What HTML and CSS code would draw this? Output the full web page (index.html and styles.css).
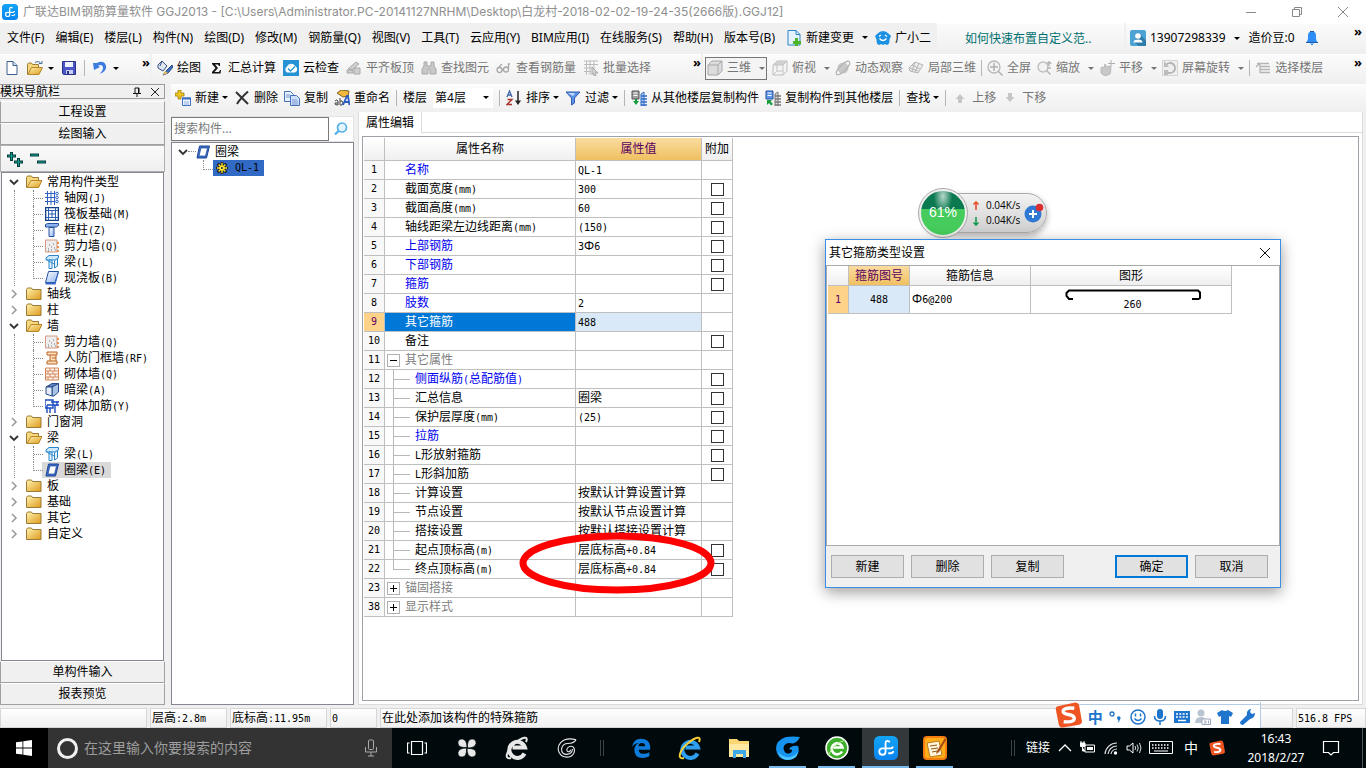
FILE: index.html
```html
<!DOCTYPE html>
<html lang="zh-CN">
<head>
<meta charset="utf-8">
<title>广联达BIM钢筋算量软件 GGJ2013</title>
<link rel="stylesheet" href="styles.css">
</head>
<body>
<svg class="defs" aria-hidden="true">
<defs>
<linearGradient id="gFold" x1="0" y1="0" x2="1" y2="1"><stop offset="0" stop-color="#fff3b0"/><stop offset="1" stop-color="#dd9a1c"/></linearGradient>
<linearGradient id="gBlue" x1="0" y1="0" x2="1" y2="1"><stop offset="0" stop-color="#fff"/><stop offset="1" stop-color="#8db4ee"/></linearGradient>
<linearGradient id="gBrand" x1="0" y1="0" x2="0" y2="1"><stop offset="0" stop-color="#12a4f5"/><stop offset="1" stop-color="#0a84f0"/></linearGradient>
</defs>
<symbol id="logo" viewBox="0 0 16 16"><rect width="16" height="16" rx="3.500" fill="url(#gBrand)"/><path d="M10.500 4.300Q10 3.300 9 3.300 7.700 3.300 7.700 5v5.500q0 2-2 2-2.200 0-2.200-2.200 0-2 2.200-2h5q1.800 0 1.800-1.300M9.500 11.500h1.500q1.800 0 1.800-1.500" fill="none" stroke="#fff" stroke-width="1.200"/></symbol>
<symbol id="new" viewBox="0 0 16 16"><path d="M3 1.500h6l4 4v9H3z" fill="#fff" stroke="#3c5f8f"/><path d="M9 1.500v4h4" fill="#c9def5" stroke="#3c5f8f"/></symbol>
<symbol id="folder" viewBox="0 0 16 16"><path d="M.5 3.500l1-1.500h4l1 1.500h8.500v10H.5z" fill="url(#gFold)" stroke="#9a7a34"/></symbol>
<symbol id="open" viewBox="0 0 16 16"><path d="M.5 13.500V3.500l1-1.500h4l1 1.500h6v3" fill="#f6d77c" stroke="#9a7a34"/><path d="M1 13.500l4-7h11l-3.500 7z" fill="url(#gFold)" stroke="#b8862a"/></symbol>
<symbol id="openarrow" viewBox="0 0 16 16"><path d="M.5 14.500V4.500l1-1.500h3l1 1.500h6v3" fill="#f6d77c" stroke="#9a7a34"/><path d="M1 14.500l3.500-7h11l-3.500 7z" fill="url(#gFold)" stroke="#b8862a"/><path d="M8 2.500c3-1.500 5-1 6 1.500M12 3.500h3v-2.500" fill="none" stroke="#456c9c"/></symbol>
<symbol id="save" viewBox="0 0 16 16"><path d="M1.500 1.500h13v13h-12l-1-1z" fill="#4a56c8" stroke="#2a3388"/><path d="M4 2h8v5H4z" fill="#eef1ff"/><path d="M5 10h7v4H5z" fill="#c9cdf0"/><path d="M6 11h2v3H6z" fill="#2a3388"/></symbol>
<symbol id="undo" viewBox="0 0 16 16"><path d="M1 3l1 7 6-3-2-1.500c3-1.500 5 0 5 2.500s-2 4-3 6c4-1.500 6.500-4.500 6-8-.5-4-5-5.500-9-3z" fill="#3c7ce0"/></symbol>
<symbol id="brush" viewBox="0 0 16 16"><path d="M1 5l4-4 5 5-4 5-5-3z" fill="#dfe6f2" stroke="#33507f"/><path d="M5 1l-2 5" stroke="#33507f"/><path d="M15 5l-6 6-3 4 5-2 5-6z" fill="#3f6fc0" stroke="#27477f"/><path d="M8 11l3 2-5 2z" fill="#f0c45a"/></symbol>
<symbol id="sigma" viewBox="0 0 16 16"><path d="M4 3h8v3h-1l-1-1.500H7L10 8l-3.500 4H11l1-2h1l-.5 3.500H4V12l3.500-4L4 4z" fill="#111"/></symbol>
<symbol id="cloud" viewBox="0 0 16 16"><rect width="16" height="16" fill="#2492d4"/><path d="M4 12.500a3.500 3.500 0 0 1 0-6A4.500 4.500 0 0 1 12 6a3.500 3.500 0 0 1 0 6.500z" fill="#fff"/><path d="M5 8.500l2.500 2.500L12 6.500" fill="none" stroke="#2492d4" stroke-width="1.300"/></symbol>
<symbol id="align" viewBox="0 0 16 16"><path d="M2 9l8-7 3 2-7 6zM1 10h6v3H1zM8 8h6v6H8z" fill="#cfcfcf" stroke="#a8a8a8"/></symbol>
<symbol id="bino" viewBox="0 0 16 16"><path d="M3 2h3v4h4V2h3v4l2 3v5H9V9H7v5H1V9l2-3z" fill="#c8c8c8" stroke="#a8a8a8"/></symbol>
<symbol id="glasses" viewBox="0 0 16 16"><g fill="none" stroke="#a8a8a8" stroke-width="1.300"><circle cx="3.500" cy="10" r="2.500"/><circle cx="10" cy="9.500" r="2.500"/><path d="M6 10h2M12.500 9V4l1.500 0M3 7l3-3"/></g></symbol>
<symbol id="batch" viewBox="0 0 16 16"><path d="M1 1h14M1 4.500h14M1 8h9M1 11.500h7M3.500 1v14M7 1v14M11 1v8" stroke="#bbb" fill="none"/><path d="M9 7l6 6h-3l1 3-2-.5-1-2-1 1z" fill="#d0d0d0" stroke="#a8a8a8"/></symbol>
<symbol id="cube" viewBox="0 0 16 16"><path d="M1 5l4-4h10v10l-4 4H1z" fill="#dcdcdc" stroke="#a8a8a8"/><path d="M1 5h10v10M11 5l4-4" fill="none" stroke="#a8a8a8"/></symbol>
<symbol id="wirecube" viewBox="0 0 16 16"><path d="M1 5l4-4h10v10l-4 4H1z" fill="#f4f4f4" stroke="#bcbcbc"/><path d="M1 5h10l4-4H5z" fill="#d0d0d0"/><path d="M1 5h10v10M11 5l4-4M5 5v6h6M5 11l-4 4" fill="none" stroke="#c4c4c4"/></symbol>
<symbol id="orbit" viewBox="0 0 16 16"><circle cx="8" cy="8" r="5.500" fill="#c8c8c8"/><ellipse cx="8" cy="8" rx="9" ry="3" transform="rotate(-45 8 8)" fill="none" stroke="#b0b0b0"/></symbol>
<symbol id="part" viewBox="0 0 16 16"><path d="M1 8l6-6 8 3-5 8-8-2zM4 5l8 4M7 2l-3 9M11 3.500L7 12M2 8l8 3" fill="#ededed" stroke="#b4b4b4"/></symbol>
<symbol id="full" viewBox="0 0 16 16"><circle cx="7" cy="7" r="6" fill="#f3f3f3" stroke="#b8b8b8" stroke-width="1.300"/><path d="M7 3v8M3 7h8M11.500 11.500l4 4" stroke="#b0b0b0" stroke-width="1.500"/></symbol>
<symbol id="zoomi" viewBox="0 0 16 16"><circle cx="7" cy="7" r="5" fill="#f3f3f3" stroke="#c0c0c0" stroke-width="1.500"/><path d="M10.500 10.500l4 4M13 1v5M10.500 3h5M11 8h4" stroke="#b4b4b4" stroke-width="1.500"/></symbol>
<symbol id="pan" viewBox="0 0 16 16"><path d="M2 9c0-3 2-2 3-1l1-4 2 3 3-1 1 3-1 5-5 2-4-3z" fill="#c8c8c8" stroke="#b8b8b8"/><path d="M12 0v7M9 3.500h7" stroke="#b0b0b0"/></symbol>
<symbol id="rot" viewBox="0 0 16 16"><path d="M.5.500h15v15H.500z" fill="#efefef" stroke="#d4d4d4"/><path d="M4 5a5 5 0 1 1 1 7" fill="none" stroke="#b0b0b0" stroke-width="1.800"/><path d="M2 1v6h5zM2 10h4v5H2z" fill="#bcbcbc"/></symbol>
<symbol id="floors" viewBox="0 0 16 16"><path d="M2 3.500h12M5 6.500h10M5 9.500h10M5 12.500h10M1 7l4-4M5 3v10" stroke="#b4b4b4" stroke-width="1.300"/></symbol>
<symbol id="docplus" viewBox="0 0 16 16"><path d="M2 .5h8l4 4V15H2z" fill="#e4f3ff" stroke="#2f83c4"/><path d="M10 .5v4h4" fill="none" stroke="#2f83c4"/><path d="M9 8h3v3h3v3h-3v2H9v-2H7v-3h2z" fill="#4db52a"/></symbol>
<symbol id="mascot" viewBox="0 0 16 16"><path d="M2 4q6-6 12 0l2 2-1.500 3.500q0 5-2.500 5.500l-2-1-2 1-2-1-2 1q-2.500-.5-2.500-5.500L0 6z" fill="#1b91e4"/><path d="M4 6.500l2-1.500M12 6.500L10 5M4.500 8.500q3.500 4 7 0" fill="none" stroke="#fff" stroke-width="1.300"/></symbol>
<symbol id="user" viewBox="0 0 16 16"><rect width="16" height="16" rx="2" fill="#4da3d4"/><path d="M10 4l6 7v5H9l-5-4z" fill="#2e7cab"/><circle cx="8" cy="6" r="2.800" fill="#fff"/><path d="M3.500 12.500q0-3 4.500-3t4.500 3z" fill="#fff"/></symbol>
<symbol id="bell" viewBox="0 0 16 16"><path d="M2 12.500c2-2 2-3 2-7a4 4 0 0 1 8 0c0 4 0 5 2 7zM6 13.500h4l-2 2z" fill="#2f8ef5"/><path d="M6 1.500h4M2 12.500h12" stroke="#1c5ca4"/></symbol>
<symbol id="newcomp" viewBox="0 0 16 16"><path d="M3 0h3v3h3v3H6v3H3V6H0V3h3z" fill="#ecc61f" stroke="#9c7c14" stroke-width=".8"/><path d="M7.500 8h8v7.500h-8z" fill="#eef5ff" stroke="#3e6fc4"/><path d="M7 7.500h9v2H7z" fill="#3e6fc4"/><path d="M9 12h5M9 14h5" stroke="#8fb0e2"/></symbol>
<symbol id="del" viewBox="0 0 16 16"><path d="M2 2l12 12M14 1.500C9 6 6 9 3 14" stroke="#333" stroke-width="2" fill="none"/></symbol>
<symbol id="copy" viewBox="0 0 16 16"><path d="M.5 1.500h6l3 3v7h-9z" fill="#e7f0ff" stroke="#4770b8"/><path d="M6.500 5.500h6l3 3v7h-9z" fill="#cfe0fb" stroke="#4770b8"/><path d="M2 5h4M2 7h4M8 10h5M8 12h6M8 14h6" stroke="#7797cc"/></symbol>
<symbol id="rename" viewBox="0 0 16 16"><path d="M3 3l4-3 8 1-1 5-5 1z" fill="#f0b83c" stroke="#7f6224"/><path d="M1 11q2-2 3 0v4q-4 0-3-2h3M6 8v7h2q2-2 0-4H6" fill="none" stroke="#444"/><path d="M9 15l4-9h1l1.500 9M10.500 12h5" fill="none" stroke="#2c5cc0" stroke-width="1.800"/></symbol>
<symbol id="az" viewBox="0 0 16 16"><path d="M1 7l2.500-6L6 7M2 5h3" fill="none" stroke="#3d65a8" stroke-width="1.300"/><path d="M1.500 9.500H6l-5 5h5" fill="none" stroke="#a8342c" stroke-width="1.400"/><path d="M12 1v11" stroke="#222" stroke-width="1.500"/><path d="M9 10.500h6L12 15z" fill="#222"/></symbol>
<symbol id="funnel" viewBox="0 0 16 16"><path d="M1 2h14l-5.500 6v5L6.500 15V8z" fill="#5b93e8" stroke="#2f5cab"/><path d="M3 3h7l-2 3z" fill="#c4dcff"/></symbol>
<symbol id="fromfl" viewBox="0 0 16 16"><path d="M1 1h7v8H1z" fill="#a0a0a0" stroke="#555"/><path d="M2.500 3h4M2.500 5.500h4" stroke="#fff"/><path d="M10 16V4l3-2v14" fill="#bcd4f6" stroke="#2f6bc4"/><path d="M10 6h6M10 9h6M10 12h6M10 15h6" stroke="#2f6bc4" stroke-width="1.500"/><path d="M4 9h2v2h2l-3 4-3-4h2z" fill="#169c3c"/></symbol>
<symbol id="tofl" viewBox="0 0 16 16"><path d="M1 1h7v8H1z" fill="#5f97ea" stroke="#2450a0"/><path d="M2.500 3h4M2.500 5.500h4" stroke="#fff"/><path d="M10 16V4l3-2v14" fill="#ddd" stroke="#777"/><path d="M10 6h6M10 9h6M10 12h6M10 15h6" stroke="#777" stroke-width="1.500"/><path d="M2 10h5L5.500 11.500 8 14l-2 1.500L4 13l-2 2z" fill="#169c3c"/></symbol>
<symbol id="up" viewBox="0 0 16 16"><path d="M8 4l4.500 5H10v4H6V9H3.500z" fill="#c6c6c6"/></symbol>
<symbol id="down" viewBox="0 0 16 16"><path d="M8 12L3.500 7H6V3h4v4h2.500z" fill="#c6c6c6"/></symbol>
<symbol id="axis" viewBox="0 0 14 14"><path d="M0 2.500h10M0 6.500h10M0 10.500h10M2.500 0v14M6 0v14M9.500 0v14" stroke="#2f62c0" fill="none"/><circle cx="12" cy="2.500" r="1.300" fill="#fff" stroke="#2f62c0"/><circle cx="12" cy="6.500" r="1.300" fill="#fff" stroke="#2f62c0"/><circle cx="12" cy="10.500" r="1.300" fill="#fff" stroke="#2f62c0"/></symbol>
<symbol id="raft" viewBox="0 0 14 14"><path d="M.5.500h13v13H.500z" fill="#fff" stroke="#153f86" stroke-width="1.600"/><path d="M3.500 3.500h7v7h-7zM1 3.500h12M1 10.500h12M3.500 1v12M10.500 1v12M7 3.500v7M3.500 7h7" fill="none" stroke="#2b60b0"/></symbol>
<symbol id="col" viewBox="0 0 14 14"><path d="M.5 1.500l2-1h11v2l-2 1.500H.500z" fill="#8db4ee" stroke="#2450a0"/><path d="M4 4.500h5v9H4z" fill="url(#gBlue)" stroke="#2450a0"/></symbol>
<symbol id="wall" viewBox="0 0 14 14"><path d="M.5 1h11.500v12H.500z" fill="#eee" stroke="#d29a80"/><path d="M3 10h1M6 11h1M9 9h1M4 6h1M8 5h1M10 11h1M6 8h1M3 12h1" stroke="#777"/><path d="M12 4h2M12 8h2M12 12h2" stroke="#e07020" stroke-width="1.500"/></symbol>
<symbol id="beam" viewBox="0 0 14 14"><path d="M1 3l3-2.500h9.500V3L11 5H1z" fill="#cfe8fb" stroke="#2a86c8"/><path d="M4 5h3v8.500H4zM9.500 6l3-3v8l-3 2z" fill="#e6f3ff" stroke="#2a86c8"/><path d="M2 5l7 4" stroke="#2a86c8"/></symbol>
<symbol id="slab" viewBox="0 0 14 14"><path d="M3.500.500h10L10 11.500H.500z" fill="url(#gBlue)" stroke="#2450a0"/><path d="M.5 11.500h9.500L13.500.500v2L10.500 13.500h-10z" fill="#3468c8"/></symbol>
<symbol id="door" viewBox="0 0 14 14"><path d="M2 1h10v3h-1v6h1v3H2v-3h3V4H2z" fill="#ffe0b8" stroke="#b8622a"/><path d="M5 4h6M7 7h4M5 10h6" stroke="#b8622a"/></symbol>
<symbol id="brick" viewBox="0 0 14 14"><path d="M.5 1h13v12H.500zM.5 4h13M.5 7h13M.5 10h13M5 1v3M9.500 1v3M3 4v3M8 4v3M5 7v3M10 7v3M3 10v3M8 10v3" fill="#fff5ec" stroke="#d4875c"/></symbol>
<symbol id="hbeam" viewBox="0 0 14 14"><path d="M1 4l6-3.500h6.500L7 4z" fill="#5f86c4" stroke="#274a86"/><path d="M7 4l6.500-3.500V9L9 13H7z" fill="#a9c2e8" stroke="#274a86"/><path d="M1 4h6v9L1 11z" fill="#e4edf9" stroke="#274a86"/></symbol>
<symbol id="rebar" viewBox="0 0 14 14"><path d="M0 1h8v8H0zM6 3h8M6 6h8M2 6h8v8M5 9v5M2 6v8M12 2v5" fill="none" stroke="#1d4cc0" stroke-width="1.400"/></symbol>
<symbol id="ring" viewBox="0 0 14 14"><path d="M3.500 1h10l-3 12H1z" fill="#3c70cc" stroke="#1d4594"/><path d="M5 3h6.500l-2 8H3z" fill="#fff" stroke="#1d4594" stroke-width=".7"/></symbol>
<symbol id="gear" viewBox="0 0 14 14"><path d="M7 0v14M0 7h14M2 2l10 10M12 2L2 12" stroke="#111" stroke-width="3.200"/><path d="M7 1v12M1 7h12M3 3l8 8M11 3l-8 8" stroke="#ffe733" stroke-width="1.600"/><circle cx="7" cy="7" r="3" fill="#ffe733"/><circle cx="7" cy="7" r="1.300" fill="#333"/></symbol>
<symbol id="cv" viewBox="0 0 10 10"><path d="M1 3l4 4 4-4" fill="none" stroke="#333" stroke-width="1.800"/></symbol>
<symbol id="cr" viewBox="0 0 10 10"><path d="M3 1l4 4-4 4" fill="none" stroke="#999" stroke-width="1.500"/></symbol>
<symbol id="mag" viewBox="0 0 14 14"><circle cx="8" cy="5.500" r="4.500" fill="#e4f4ff" stroke="#58b0e8" stroke-width="1.700"/><path d="M5 8.500l-4 4" stroke="#58b0e8" stroke-width="2.400"/></symbol>
<symbol id="sogou" viewBox="0 0 28 26"><path d="M3 4l18-4q3 0 4 3l3 17q0 2-3 3L8 26q-3 0-4-3L1 8q-1-3 2-4z" fill="#ee5523"/><path d="M20 6Q10 5 8.500 8.500 8 11.500 14 12.500t6 4.500q-1 4-11 3" fill="none" stroke="#fff" stroke-width="3.500"/></symbol>
<symbol id="win" viewBox="0 0 16 16"><path d="M0 2.300l6.500-.9v6.200H0zM7.300 1.300L16 0v7.600H7.300zM0 8.400h6.500v6.200L0 13.700zM7.300 8.400H16V16l-8.700-1.300z" fill="#fff"/></symbol>
<symbol id="mic" viewBox="0 0 16 18"><rect x="5.500" y="1" width="5" height="9.500" rx="1" fill="none" stroke="#aaa"/><path d="M2.500 8v5h11V8M8 13v4M5 17h6" fill="none" stroke="#aaa"/></symbol>
<symbol id="tview" viewBox="0 0 20 16"><path d="M4.500 1.500h11v13h-11zM2.500 3H.500v10h2M17.500 3h2v10h-2" fill="none" stroke="#fff" stroke-width="1.200"/></symbol>
<symbol id="fan" viewBox="0 0 22 22"><path d="M11 10.500Q1 11 1 5.500 1 1 6 1q5 1 5 9.500zM11.500 11Q11 1 16.500 1 21 1 21 6q-1 5-9.500 5zM11 11.500Q21 11 21 16.500 21 21 16 21q-5-1-5-9.500zM10.500 11Q11 21 5.500 21 1 21 1 16q1-5 9.500-5z" fill="#e8e8e8" stroke="#000a0d" stroke-width=".8"/></symbol>
<symbol id="ie" viewBox="0 0 24 24"><path d="M19.500 17.500A8 8 0 1 1 20 11.500H7.500" fill="none" stroke="currentColor" stroke-width="4"/><path d="M6 22C-1 24 1 15 9 8S24-1 21 6" fill="none" stroke="var(--ring, currentColor)" stroke-width="2"/></symbol>
<symbol id="edge" viewBox="0 0 24 24"><path d="M1 11Q3 1 12 1q10 0 11 9v4H9q1 5 6 5 4 0 7-2v5q-4 2-8 2Q4 24 4 14q0-5 5-8-6 1-8 5zm8-1h8q0-4-4-4t-4 4z" fill="#0f7cdc"/></symbol>
<symbol id="gswirl" viewBox="0 0 22 22"><path d="M21 2Q10-1 4 5C-2 12 3 21 11 21c7 0 10-7 7-11-3-2-8 0-7 4 1 2 4 1 4-1M21 2q-3 4-9 4-6 0-7 6 0 6 6 6 6-1 6-6" fill="none" stroke="currentColor" stroke-width="1.200"/></symbol>
<symbol id="gblue" viewBox="0 0 24 24"><path d="M24 1Q20 9 14 7 8 7 7.500 12 8 18 13 17.500q3-.5 3-3.500l-3-1q3-4 9-3 2 5-1 9-4 5-10 5Q1 23 0 13 0 4 10 1q7-1 14 0z" fill="#1593ef"/><path d="M2 16Q7 22 14 21q5-1 8-5-1 8-11 8-7-1-9-8z" fill="#4fc4ff"/></symbol>
<symbol id="files" viewBox="0 0 24 22"><path d="M2 2h8l2 2h10v16H2z" fill="#fbd774"/><path d="M2 7h20v13H2z" fill="#ffe9a2"/><path d="M6 21v-8h13v8h-3v-4H9v4z" fill="#3fa9e8"/></symbol>
<symbol id="ge" viewBox="0 0 24 24"><circle cx="12" cy="12" r="11" fill="#3eae2c" stroke="#fff" stroke-width="1.500"/><path d="M17 15.500a5.500 5.500 0 1 1 .5-4H8" fill="none" stroke="#fff" stroke-width="2.600"/><path d="M3 20Q8 8 20 4" stroke="#b8f090" fill="none"/></symbol>
<symbol id="note" viewBox="0 0 24 24"><rect x="1" y="1" width="22" height="22" rx="3" fill="#ffad18" stroke="#f47c10" stroke-width="2"/><path d="M4 7l12-2 3 14-12 2z" fill="#fff4d8" stroke="#b87a20"/><path d="M7 10l7-1M8 13l7-1M9 16l5-1" stroke="#8a5a20"/><path d="M22 2l-8 13-1 3 3-2 7-12z" fill="#a34a18"/></symbol>
</svg>

<header class="titlebar">
  <svg class="i16"><use href="#logo"/></svg>
  <h1>广联达BIM钢筋算量软件 GGJ2013 - [C:\Users\Administrator.PC-20141127NRHM\Desktop\白龙村-2018-02-02-19-24-35(2666版).GGJ12]</h1>
  <div class="winbtns">
    <button aria-label="最小化"><svg viewBox="0 0 12 12"><path d="M1 6.500h10" stroke="#888"/></svg></button>
    <button aria-label="还原"><svg viewBox="0 0 12 12"><path d="M1.500 3.500h7v7h-7zM3.500 3.500v-2h7v7h-2" fill="none" stroke="#888"/></svg></button>
    <button aria-label="关闭"><svg viewBox="0 0 12 12"><path d="M1 1l10 10M11 1L1 11" stroke="#888"/></svg></button>
  </div>
</header>

<nav class="menubar">
  <div class="menus">
    <button>文件(F)</button><button>编辑(E)</button><button>楼层(L)</button><button>构件(N)</button><button>绘图(D)</button><button>修改(M)</button><button>钢筋量(Q)</button><button>视图(V)</button><button>工具(T)</button><button>云应用(Y)</button><button>BIM应用(I)</button><button>在线服务(S)</button><button>帮助(H)</button><button>版本号(B)</button>
    <button class="tb"><svg class="i16"><use href="#docplus"/></svg>新建变更<i class="dd"></i></button>
    <button class="tb"><svg class="i16"><use href="#mascot"/></svg>广小二</button>
  </div>
  <div class="tip"><a href="#">如何快速布置自定义范..</a></div>
  <div class="account">
    <button class="tb"><svg class="i16"><use href="#user"/></svg><span class="phone">13907298339</span><i class="dd"></i></button>
    <span>造价豆:0</span>
    <svg class="i16"><use href="#bell"/></svg>
    <b class="more">»</b>
  </div>
</nav>

<div class="toolrow">
  <div class="group files">
    <button class="tb" aria-label="新建"><svg class="i16"><use href="#new"/></svg></button>
    <button class="tb" aria-label="打开"><svg class="i16"><use href="#openarrow"/></svg><i class="dd"></i></button>
    <button class="tb" aria-label="保存"><svg class="i16"><use href="#save"/></svg></button>
    <i class="sep"></i>
    <button class="tb" aria-label="撤销"><svg class="i16"><use href="#undo"/></svg><i class="dd"></i></button>
    <b class="more">»</b>
  </div>
  <div class="group draw">
    <button class="tb"><svg class="i16"><use href="#brush"/></svg>绘图</button>
    <button class="tb"><svg class="i16"><use href="#sigma"/></svg>汇总计算</button>
    <button class="tb"><svg class="i16"><use href="#cloud"/></svg>云检查</button>
    <button class="tb off"><svg class="i16"><use href="#align"/></svg>平齐板顶</button>
    <button class="tb off"><svg class="i16"><use href="#bino"/></svg>查找图元</button>
    <button class="tb off"><svg class="i16"><use href="#glasses"/></svg>查看钢筋量</button>
    <button class="tb off"><svg class="i16"><use href="#batch"/></svg>批量选择</button>
    <b class="more">»</b>
  </div>
  <div class="group view">
    <button class="tb off boxed"><svg class="i16"><use href="#cube"/></svg>三维<i class="dd"></i></button>
    <button class="tb off"><svg class="i16"><use href="#wirecube"/></svg>俯视<i class="dd"></i></button>
    <button class="tb off"><svg class="i16"><use href="#orbit"/></svg>动态观察</button>
    <button class="tb off"><svg class="i16"><use href="#part"/></svg>局部三维</button>
    <i class="sep"></i>
    <button class="tb off"><svg class="i16"><use href="#full"/></svg>全屏</button>
    <button class="tb off"><svg class="i16"><use href="#zoomi"/></svg>缩放<i class="dd"></i></button>
    <button class="tb off"><svg class="i16"><use href="#pan"/></svg>平移<i class="dd"></i></button>
    <button class="tb off"><svg class="i16"><use href="#rot"/></svg>屏幕旋转<i class="dd"></i></button>
    <i class="sep"></i>
    <button class="tb off"><svg class="i16"><use href="#floors"/></svg>选择楼层</button>
    <b class="more">»</b>
  </div>
</div>

<main class="work">
  <aside class="nav">
    <div class="navhead"><span>模块导航栏</span>
      <svg viewBox="0 0 10 10"><path d="M3 1h4v5M3 1v5M1 6.500h8M5 6.500V10M6.500 1v5" fill="none" stroke="#111"/></svg>
      <svg viewBox="0 0 10 10"><path d="M1 1l8 8M9 1L1 9" stroke="#222"/></svg></div>
    <button class="navbtn">工程设置</button>
    <button class="navbtn">绘图输入</button>
    <div class="navtools">
      <svg viewBox="0 0 42 16"><g stroke="#053c3c" stroke-width="3"><path d="M0 5h9M4.500 1v9M7 11h9M11.500 7v9M23 4h9M30 11h9"/></g><g stroke="#14a294"><path d="M1 5h7M4.500 2v7M8 11h7M11.500 8v7M24 4h7M31 11h7"/></g></svg>
    </div>
    <ul class="tree">
      <li><div class="n"><svg class="i10"><use href="#cv"/></svg><svg class="i16"><use href="#open"/></svg>常用构件类型</div>
        <ul>
          <li><svg class="i14"><use href="#axis"/></svg><span>轴网<span class="m">(J)</span></span></li>
          <li><svg class="i14"><use href="#raft"/></svg><span>筏板基础<span class="m">(M)</span></span></li>
          <li><svg class="i14"><use href="#col"/></svg><span>框柱<span class="m">(Z)</span></span></li>
          <li><svg class="i14"><use href="#wall"/></svg><span>剪力墙<span class="m">(Q)</span></span></li>
          <li><svg class="i14"><use href="#beam"/></svg><span>梁<span class="m">(L)</span></span></li>
          <li><svg class="i14"><use href="#slab"/></svg><span>现浇板<span class="m">(B)</span></span></li>
        </ul></li>
      <li><div class="n"><svg class="i10"><use href="#cr"/></svg><svg class="i16"><use href="#folder"/></svg>轴线</div></li>
      <li><div class="n"><svg class="i10"><use href="#cr"/></svg><svg class="i16"><use href="#folder"/></svg>柱</div></li>
      <li><div class="n"><svg class="i10"><use href="#cv"/></svg><svg class="i16"><use href="#open"/></svg>墙</div>
        <ul>
          <li><svg class="i14"><use href="#wall"/></svg><span>剪力墙<span class="m">(Q)</span></span></li>
          <li><svg class="i14"><use href="#door"/></svg><span>人防门框墙<span class="m">(RF)</span></span></li>
          <li><svg class="i14"><use href="#brick"/></svg><span>砌体墙<span class="m">(Q)</span></span></li>
          <li><svg class="i14"><use href="#hbeam"/></svg><span>暗梁<span class="m">(A)</span></span></li>
          <li><svg class="i14"><use href="#rebar"/></svg><span>砌体加筋<span class="m">(Y)</span></span></li>
        </ul></li>
      <li><div class="n"><svg class="i10"><use href="#cr"/></svg><svg class="i16"><use href="#folder"/></svg>门窗洞</div></li>
      <li><div class="n"><svg class="i10"><use href="#cv"/></svg><svg class="i16"><use href="#open"/></svg>梁</div>
        <ul>
          <li><svg class="i14"><use href="#beam"/></svg><span>梁<span class="m">(L)</span></span></li>
          <li class="cur"><svg class="i14"><use href="#ring"/></svg><span>圈梁<span class="m">(E)</span></span></li>
        </ul></li>
      <li><div class="n"><svg class="i10"><use href="#cr"/></svg><svg class="i16"><use href="#folder"/></svg>板</div></li>
      <li><div class="n"><svg class="i10"><use href="#cr"/></svg><svg class="i16"><use href="#folder"/></svg>基础</div></li>
      <li><div class="n"><svg class="i10"><use href="#cr"/></svg><svg class="i16"><use href="#folder"/></svg>其它</div></li>
      <li><div class="n"><svg class="i10"><use href="#cr"/></svg><svg class="i16"><use href="#folder"/></svg>自定义</div></li>
    </ul>
    <button class="navbtn">单构件输入</button>
    <button class="navbtn">报表预览</button>
  </aside>

  <section class="content">
    <div class="comptools">
      <button class="tb"><svg class="i16"><use href="#newcomp"/></svg>新建<i class="dd"></i></button>
      <button class="tb"><svg class="i16"><use href="#del"/></svg>删除</button>
      <button class="tb"><svg class="i16"><use href="#copy"/></svg>复制</button>
      <button class="tb"><svg class="i16"><use href="#rename"/></svg>重命名</button>
      <i class="sep"></i>
      <label for="floor">楼层</label>
      <span class="picker"><select id="floor"><option>第4层</option></select><i class="dd"></i></span>
      <i class="sep"></i>
      <button class="tb"><svg class="i16"><use href="#az"/></svg>排序<i class="dd"></i></button>
      <button class="tb"><svg class="i16"><use href="#funnel"/></svg>过滤<i class="dd"></i></button>
      <i class="sep"></i>
      <button class="tb"><svg class="i16"><use href="#fromfl"/></svg>从其他楼层复制构件</button>
      <button class="tb"><svg class="i16"><use href="#tofl"/></svg>复制构件到其他楼层</button>
      <i class="sep"></i>
      <button class="tb">查找<i class="dd"></i></button>
      <i class="sep"></i>
      <button class="tb off"><svg class="i16"><use href="#up"/></svg>上移</button>
      <button class="tb off"><svg class="i16"><use href="#down"/></svg>下移</button>
    </div>
    <div class="panes">
      <section class="complist">
        <div class="search"><input type="text" aria-label="搜索构件" placeholder="搜索构件..."><button aria-label="搜索"><svg class="i14"><use href="#mag"/></svg></button></div>
        <div class="list">
          <div class="root"><svg class="i10"><use href="#cv"/></svg><i class="dots"></i><svg class="i14"><use href="#ring"/></svg><span>圈梁</span></div>
          <div class="leaf"><span class="sel"><svg class="i12"><use href="#gear"/></svg><span class="m">QL-1</span></span></div>
        </div>
      </section>
      <section class="props">
        <div class="tabs"><button class="tab">属性编辑</button></div>
        <div class="sheet">
          <table class="grid">
            <colgroup><col class="c1"><col class="c2"><col class="c3"><col class="c4"></colgroup>
            <thead><tr><th></th><th>属性名称</th><th class="hot">属性值</th><th>附加</th></tr></thead>
            <tbody>
              <tr><th>1</th><td class="blue">名称</td><td><span class="m">QL-1</span></td><td></td></tr>
              <tr><th>2</th><td>截面宽度<span class="m">(mm)</span></td><td><span class="m">300</span></td><td><input type="checkbox" aria-label="附加 2"></td></tr>
              <tr><th>3</th><td>截面高度<span class="m">(mm)</span></td><td><span class="m">60</span></td><td><input type="checkbox" aria-label="附加 3"></td></tr>
              <tr><th>4</th><td>轴线距梁左边线距离<span class="m">(mm)</span></td><td><span class="m">(150)</span></td><td><input type="checkbox" aria-label="附加 4"></td></tr>
              <tr><th>5</th><td class="blue">上部钢筋</td><td><span class="m">3</span>Φ<span class="m">6</span></td><td><input type="checkbox" aria-label="附加 5"></td></tr>
              <tr><th>6</th><td class="blue">下部钢筋</td><td></td><td><input type="checkbox" aria-label="附加 6"></td></tr>
              <tr><th>7</th><td class="blue">箍筋</td><td></td><td><input type="checkbox" aria-label="附加 7"></td></tr>
              <tr><th>8</th><td class="blue">肢数</td><td><span class="m">2</span></td><td></td></tr>
              <tr class="active"><th>9</th><td>其它箍筋</td><td><span class="m">488</span></td><td></td></tr>
              <tr><th>10</th><td>备注</td><td></td><td><input type="checkbox" aria-label="附加 10"></td></tr>
              <tr class="sec"><th>11</th><td><button class="pm" aria-label="折叠"><svg viewBox="0 0 11 11"><path d="M2 5.500h7" stroke="#000"/></svg></button>其它属性</td><td></td><td></td></tr>
              <tr class="kid"><th>12</th><td class="blue">侧面纵筋<span class="m">(</span>总配筋值<span class="m">)</span></td><td></td><td><input type="checkbox" aria-label="附加 12"></td></tr>
              <tr class="kid"><th>13</th><td>汇总信息</td><td>圈梁</td><td><input type="checkbox" aria-label="附加 13"></td></tr>
              <tr class="kid"><th>14</th><td>保护层厚度<span class="m">(mm)</span></td><td><span class="m">(25)</span></td><td><input type="checkbox" aria-label="附加 14"></td></tr>
              <tr class="kid"><th>15</th><td class="blue">拉筋</td><td></td><td><input type="checkbox" aria-label="附加 15"></td></tr>
              <tr class="kid"><th>16</th><td><span class="m">L</span>形放射箍筋</td><td></td><td><input type="checkbox" aria-label="附加 16"></td></tr>
              <tr class="kid"><th>17</th><td><span class="m">L</span>形斜加筋</td><td></td><td><input type="checkbox" aria-label="附加 17"></td></tr>
              <tr class="kid"><th>18</th><td>计算设置</td><td>按默认计算设置计算</td><td></td></tr>
              <tr class="kid"><th>19</th><td>节点设置</td><td>按默认节点设置计算</td><td></td></tr>
              <tr class="kid"><th>20</th><td>搭接设置</td><td>按默认搭接设置计算</td><td></td></tr>
              <tr class="kid"><th>21</th><td>起点顶标高<span class="m">(m)</span></td><td>层底标高<span class="m">+0.84</span></td><td><input type="checkbox" aria-label="附加 21"></td></tr>
              <tr class="kid end"><th>22</th><td>终点顶标高<span class="m">(m)</span></td><td>层底标高<span class="m">+0.84</span></td><td><input type="checkbox" aria-label="附加 22"></td></tr>
              <tr class="sec"><th>23</th><td><button class="pm" aria-label="展开"><svg viewBox="0 0 11 11"><path d="M2 5.500h7M5.500 2v7" stroke="#000"/></svg></button>锚固搭接</td><td></td><td></td></tr>
              <tr class="sec"><th>38</th><td><button class="pm" aria-label="展开"><svg viewBox="0 0 11 11"><path d="M2 5.500h7M5.500 2v7" stroke="#000"/></svg></button>显示样式</td><td></td><td></td></tr>
            </tbody>
          </table>
        </div>
      </section>
    </div>
  </section>
</main>

<footer class="status">
  <span class="s1"></span><span class="s2">层高<span class="m">:2.8m</span></span><span class="s3">底标高<span class="m">:11.95m</span></span><span class="s4"><span class="m">0</span></span><span class="s5">在此处添加该构件的特殊箍筋</span><span class="s6"><span class="m">516.8 FPS</span></span>
</footer>

<div class="taskbar">
  <button class="start" aria-label="开始"><svg class="i16"><use href="#win"/></svg></button>
  <div class="cortana"><i class="ringo"></i><input type="text" aria-label="搜索" placeholder="在这里输入你要搜索的内容"><svg class="mic"><use href="#mic"/></svg></div>
  <div class="apps pinned">
    <button aria-label="任务视图"><svg class="i20"><use href="#tview"/></svg></button>
    <button aria-label="应用"><svg class="i20"><use href="#fan"/></svg></button>
    <button class="white" aria-label="浏览器"><svg class="i24"><use href="#ie"/></svg></button>
    <button class="white" aria-label="G"><svg class="i20"><use href="#gswirl"/></svg></button>
  </div>
  <i class="tsep"></i>
  <div class="apps running">
    <button aria-label="Edge"><svg class="i20"><use href="#edge"/></svg></button>
    <button class="iebtn" aria-label="Internet Explorer"><svg class="i24"><use href="#ie"/></svg></button>
    <button aria-label="文件资源管理器"><svg class="i24"><use href="#files"/></svg></button>
    <button class="on" aria-label="广联达"><svg class="i24"><use href="#gblue"/></svg></button>
    <button class="on" aria-label="浏览器"><svg class="i24"><use href="#ge"/></svg></button>
    <button class="on now" aria-label="算量软件"><svg class="i24"><use href="#logo"/></svg></button>
    <button class="on" aria-label="便笺"><svg class="i24"><use href="#note"/></svg></button>
  </div>
  <div class="tray">
    <i class="tsep"></i>
    <span>链接</span>
    <svg class="i16" viewBox="0 0 16 16"><path d="M2 11l6-6 6 6" fill="none" stroke="#fff" stroke-width="1.300"/></svg>
    <svg class="i16" viewBox="0 0 16 16"><path d="M5 5h9.500v7H5z" fill="none" stroke="#fff"/><path d="M7 7h6v3H7z" fill="#fff"/><path d="M0 3h5v3q-2.500 2-5 0zM1 1v2M4 1v2M2.500 7v4H5" fill="#fff" stroke="#fff"/></svg>
    <svg class="i16" viewBox="0 0 16 16"><g fill="none" stroke="#ddd" stroke-width="1.200"><path d="M2 14A12 12 0 0 1 14 3M5 14a9 9 0 0 1 9-8M8 14a6 6 0 0 1 6-5"/></g><circle cx="12.500" cy="13" r="1.700" fill="#fff"/></svg>
    <svg class="i16" viewBox="0 0 16 16"><path d="M1 6h2.500L7 3v10L3.500 10H1z" fill="none" stroke="#fff"/><path d="M9 6q1.500 2 0 4M11 4.500q2.500 3.500 0 7M13.500 3q3 5 0 10" fill="none" stroke="#ddd"/></svg>
    <svg class="kb" viewBox="0 0 24 14"><path d="M.5.500h23v12H.500z" fill="none" stroke="#fff"/><path d="M3 4h18M3 7h18" stroke="#fff" stroke-dasharray="1.500 1.500" stroke-width="1.500"/><path d="M5 10h14" stroke="#fff"/></svg>
    <span class="zh">中</span>
    <svg class="i16"><use href="#sogou"/></svg>
    <time>16:43<br>2018/2/27</time>
    <svg class="i20" viewBox="0 0 20 20"><path d="M2.500 3.500h15v11h-5L10 17l-2.500-2.500h-5z" fill="none" stroke="#fff" stroke-width="1.200"/></svg>
    <i class="peek"></i>
  </div>
</div>

<svg class="mark" viewBox="0 0 196 62" aria-hidden="true"><ellipse cx="98" cy="31" rx="94" ry="27" fill="none" stroke="#ff0000" stroke-width="7"/></svg>

<div class="speed">
  <div class="ball">61%</div>
  <div class="rates"><span><svg viewBox="0 0 8 10"><path d="M4 1v8M1.500 3.500L4 1l2.500 2.500" fill="none" stroke="#e8502c" stroke-width="1.600"/></svg>0.04K/s</span><span><svg viewBox="0 0 8 10"><path d="M4 1v8M1.500 6.500L4 9l2.500-2.500" fill="none" stroke="#189a50" stroke-width="1.600"/></svg>0.04K/s</span></div>
  <svg class="plus" viewBox="0 0 20 20"><circle cx="9" cy="11" r="8.500" fill="#2f78d4"/><path d="M9 7v8M5 11h8" stroke="#fff" stroke-width="2"/><circle cx="15.500" cy="4.500" r="3.800" fill="#d83030"/></svg>
</div>

<div class="dialog" role="dialog" aria-label="其它箍筋类型设置">
  <div class="dtitle"><span>其它箍筋类型设置</span><button aria-label="关闭"><svg viewBox="0 0 12 12"><path d="M1 1l10 10M11 1L1 11" stroke="#111"/></svg></button></div>
  <div class="dbody">
    <table class="grid dgrid">
      <colgroup><col class="d1"><col class="d2"><col class="d3"><col class="d4"></colgroup>
      <thead><tr><th></th><th class="hot">箍筋图号</th><th>箍筋信息</th><th>图形</th></tr></thead>
      <tbody><tr><th class="rowhot">1</th><td class="pick"><span class="m">488</span></td><td>Φ<span class="m">6@200</span></td>
      <td class="shape"><svg viewBox="0 0 136 12"><path d="M8 10H4L1.500 7V4L4 1.500h129l2 2V9l-1.500 1H127" fill="none" stroke="#000" stroke-width="2"/></svg><span class="m">260</span></td></tr></tbody>
    </table>
  </div>
  <div class="dfoot"><button>新建</button><button>删除</button><button>复制</button><i class="fill"></i><button class="ok">确定</button><button>取消</button></div>
</div>

<div class="ime">
  <svg class="so"><use href="#sogou"/></svg>
  <b>中</b>
  <svg class="i16" viewBox="0 0 16 16"><circle cx="4" cy="5" r="2" fill="none" stroke="#1f74cc" stroke-width="1.300"/><path d="M9 9a1.800 1.800 0 1 1 3 1.500Q11.500 13 9.500 13.500q1-1 1-2.500Q9 10.500 9 9z" fill="#1f74cc"/></svg>
  <svg class="i16" viewBox="0 0 16 16"><circle cx="8" cy="8" r="7" fill="none" stroke="#1f74cc" stroke-width="1.500"/><path d="M5.500 4.500v3M10.500 4.500v3M4.500 9.500q3.500 4 7 0" fill="none" stroke="#1f74cc" stroke-width="1.500"/></svg>
  <svg class="i16" viewBox="0 0 16 16"><rect x="5" y="0" width="6" height="10" rx="3" fill="#1f74cc"/><path d="M2.500 7q0 5 5.500 5t5.500-5M8 12v4" fill="none" stroke="#1f74cc" stroke-width="1.500"/></svg>
  <svg class="i16" viewBox="0 0 16 16"><path d="M0 2h16v12H0z" fill="#1f74cc"/><path d="M2 5h12M2 8h12" stroke="#fff" stroke-dasharray="2 1.300" stroke-width="1.500"/><path d="M4 11.500h8" stroke="#fff" stroke-width="1.500"/></svg>
  <svg class="i16" viewBox="0 0 16 16"><circle cx="6" cy="4" r="3.500" fill="#b9c4d2"/><path d="M0 14q0-6 6-6 4 0 5 3v3z" fill="#b9c4d2"/><path d="M7 10h8.500v5.500H7z" fill="#fff" stroke="#9aa8ba"/><path d="M9 12h2v2H9M13.500 11.500v3" fill="none" stroke="#9aa8ba"/></svg>
  <svg class="i16" viewBox="0 0 16 16"><path d="M5 1q3 2 6 0l5 3-2 4-2-1v8H4V7L2 8 0 4z" fill="#1f74cc"/></svg>
  <svg class="i16" viewBox="0 0 16 16"><path d="M1 13l7-7q-1-4 3-6h1l-1 3 2 2 3-1q0 5-5 6l-7 6q-3 0-3-3z" fill="#1f74cc"/></svg>
</div>
</body>
</html>
```
FILE: styles.css
```css
* { box-sizing: border-box; }
html, body { height: 100%; }
body {
  margin: 0;
  position: relative;
  display: flex;
  flex-direction: column;
  overflow: hidden;
  background: #f0f0f0;
  color: #000;
  font: 12px/16px "Noto Sans", "Noto Sans CJK SC", sans-serif;
}
button, input, select { font: inherit; color: inherit; }
button { border: 0; padding: 0; background: none; white-space: nowrap; }
ul { list-style: none; margin: 0; padding: 0; }
svg { flex: none; display: block; }
.defs { position: absolute; width: 0; height: 0; }
.i10 { width: 10px; height: 10px; }
.i12 { width: 12px; height: 12px; }
.i14 { width: 14px; height: 14px; }
.i16 { width: 16px; height: 16px; }
.i20 { width: 20px; height: 20px; }
.i24 { width: 24px; height: 24px; }
.m { font-family: "DejaVu Sans Mono", monospace; font-size: 10px; }

/* title bar */
.titlebar { flex: none; height: 23px; display: flex; align-items: center; padding-left: 2px; gap: 5px; background: #fff; }
.titlebar h1 { flex: 1; margin: 0; font-family: Inter, "Noto Sans CJK SC", sans-serif; font-size: 12px; font-weight: 400; color: #8f8f8f; white-space: nowrap; overflow: hidden; }
.winbtns { display: flex; }
.winbtns button { width: 46px; display: flex; justify-content: center; }
.winbtns svg { width: 12px; height: 12px; }

/* menu and toolbars */
.menubar { flex: none; height: 31px; display: flex; }
.menus { flex: none; width: 937px; display: flex; align-items: center; gap: 11px; padding-left: 7px; padding-bottom: 2px; }
.tb { display: flex; align-items: center; gap: 4px; }
.dd { width: 0; height: 0; margin: 0 0 0 4px; border: 3px solid transparent; border-top-color: currentColor; border-bottom: 0; }
.menus .dd { margin-right: -4px; }
.off { color: #757575; }
.sep { width: 1px; height: 16px; background: #b5b5b5; }
.more { font-size: 13px; line-height: 10px; align-self: flex-start; margin-left: auto; padding-top: 2px; }
.tip, .account, .group, .comptools { background: linear-gradient(#fbfbfb, #efefef); border-top: 1px solid #fff; }
.tip { flex: 1; display: flex; align-items: center; padding-left: 28px; margin-right: 2px; }
.tip a { color: #007070; text-decoration: none; white-space: nowrap; }
.account { width: 240px; display: flex; align-items: center; gap: 9px; padding: 0 4px 2px; }
.toolrow { flex: none; height: 30px; display: flex; gap: 2px; }
.group { display: flex; align-items: center; padding-bottom: 3px; }
.files { width: 150px; padding-left: 4px; gap: 7px; }
.files .dd { margin-left: 1px; }
.draw { width: 549px; padding-left: 5px; gap: 7px; }
.view { flex: 1; padding: 0 4px 3px 2px; gap: 5px; }
.boxed { height: 23px; border: 1px solid #777; background: #f4f4f4; padding: 0 1px; }

/* work area */
.work { flex: 1; min-height: 0; display: flex; gap: 6px; }
.nav { width: 165px; display: flex; flex-direction: column; }
.navhead { flex: none; height: 15px; display: flex; align-items: center; border: 1px solid #9a9a9a; border-left: 0; margin-bottom: 2px; padding-right: 4px; }
.navhead span { flex: 1; white-space: nowrap; }
.navhead svg { width: 10px; height: 10px; margin-left: 8px; }
.navbtn { flex: none; height: 22px; border: 1px solid #a0a0a0; border-top-color: #fff; background: #f0f0f0; }
.navtools { flex: none; height: 27px; padding: 5px 0 0 6px; border: 1px solid #b0b0b0; background: linear-gradient(#fafafa, #efefef); }
.navtools svg { width: 42px; height: 16px; }
.tree { flex: 1; min-height: 0; margin: 0 1px; border: 1px solid #828790; background: #fff; padding: 1px 0 0 7px; }
.n { display: flex; align-items: center; height: 16px; gap: 7px; white-space: nowrap; }
.n .i16 { margin-right: -2px; }
.tree ul { margin-left: 5px; border-left: 1px dotted #888; }
.tree ul li { display: flex; align-items: center; height: 16px; padding-left: 18px; gap: 5px; white-space: nowrap; }
.tree ul li::before { content: ""; width: 10px; height: 16px; margin-right: -4px; border-left: 1px dotted #888; background: repeating-linear-gradient(90deg, #888 0 1px, transparent 1px 2px) 0 8px / 100% 1px no-repeat; }
.tree ul li:last-child::before { height: 9px; align-self: flex-start; }
.cur { background: linear-gradient(#d9d9d9, #d9d9d9) 27px 0 / 69px 16px no-repeat; }

.content { flex: 1; min-width: 0; display: flex; flex-direction: column; }
.comptools { flex: none; height: 28px; display: flex; align-items: center; gap: 6px; padding: 0 4px 2px; }
.comptools .dd { margin-left: -1px; }
.picker { display: flex; align-items: center; width: 60px; height: 20px; background: #fff; }
.picker select { flex: 1; min-width: 0; height: 20px; border: 0; padding: 0 2px; appearance: none; background: none; }
.picker .dd { margin: 0 4px; }
.panes { flex: 1; min-height: 0; display: flex; gap: 4px; }
.complist { width: 183px; display: flex; flex-direction: column; padding-top: 4px; }
.search { flex: none; height: 26px; display: flex; background: #fff; border: 1px solid #e2e2e2; border-left: 0; }
.search input { width: 158px; border: 1px solid #7a7a7a; padding: 0 2px; background: #fff; outline: 0; }
.search input::placeholder { color: #7b7b7b; opacity: 1; }
.search button { flex: 1; display: flex; align-items: center; justify-content: center; }
.list { flex: 1; border: 1px solid #828790; background: #fff; }
.root { display: flex; align-items: center; height: 17px; padding-left: 6px; }
.dots { width: 8px; border-top: 1px dotted #888; }
.root .i14 { margin: 0 5px 0 0; }
.leaf { display: flex; padding-left: 31px; }
.leaf::before { content: ""; width: 9px; height: 9px; border-left: 1px dotted #888; border-bottom: 1px dotted #888; }
.sel { display: flex; align-items: center; gap: 7px; height: 16px; width: 51px; padding-left: 3px; background: #316ac5; }

.props { flex: 1; display: flex; flex-direction: column; margin-right: 3px; border: 1px solid #dcdcdc; border-top: 0; background: #fff; }
.tabs { flex: none; height: 21px; display: flex; border-bottom: 1px solid #dcdcdc; }
.tab { height: 21px; padding: 0 7px; border-right: 1px solid #dcdcdc; background: #fff; }
.sheet { flex: 1; min-height: 0; margin: 3px; border: 1px solid #a0a0a8; padding: 1px; }
.grid { border-spacing: 0; table-layout: fixed; line-height: 16px; }
.grid th, .grid td { padding: 0 2px; border-right: 1px solid #bfbfbf; border-bottom: 1px solid #bfbfbf; font-weight: 400; text-align: left; white-space: nowrap; overflow: hidden; height: 19px; }
.grid th { text-align: center; background: linear-gradient(#fff, #efefef); }
.grid tbody th { font: 10px/16px "DejaVu Sans Mono", monospace; padding: 0; background: #f8f8f8; }
.grid thead th { height: 23px; }
.grid .hot { color: #5a0060; background: linear-gradient(#fadca0, #efc060); }
.sheet .grid { width: 369px; }
.c1 { width: 21px; } .c2 { width: 191px; } .c3 { width: 126px; } .c4 { width: 31px; }
.sheet tbody td:nth-child(2) { padding-left: 20px; }
.sheet tbody td:last-child { padding-left: 9px; }
.grid .blue { color: #0000f0; }
.grid input { display: block; appearance: none; width: 13px; height: 13px; margin: 0; border: 1px solid #333; background: #fff; }
.sheet .active th { background: #ffd28a; color: #5a0060; }
.sheet .active td:nth-child(2) { background: #0078d7; color: #fff; }
.sheet .active td:nth-child(3) { background: #d9e9f8; }
.sheet .sec td:nth-child(2) { padding-left: 2px; color: #808080; }
.pm { display: inline-block; width: 13px; height: 13px; margin-right: 5px; border: 1px solid #b0b0b0; vertical-align: -2px; background: #fff; }
.pm svg { width: 11px; height: 11px; }
.sheet .kid td:nth-child(2) { padding-left: 30px; background: linear-gradient(#b8b8b8, #b8b8b8) 8px 0 / 1px 100% no-repeat, linear-gradient(#b8b8b8, #b8b8b8) 8px 9px / 17px 1px no-repeat; }
.sheet .end td:nth-child(2) { background-size: 1px 10px, 17px 1px; }

/* status bar */
.status { flex: none; height: 22px; margin-top: 1px; display: flex; gap: 3px; padding-top: 2px; }
.status > span { border: 1px solid #d6d6d6; background: linear-gradient(#fff, #f0f0f0); line-height: 18px; padding-left: 1px; white-space: nowrap; }
.s1 { width: 147px; } .s2 { width: 77px; } .s3 { width: 97px; } .s4 { width: 47px; } .s5 { flex: 1; } .s6 { width: 70px; }

/* taskbar */
.taskbar { flex: none; height: 40px; display: flex; align-items: stretch; background: #000a0d; color: #fff; }
.start { width: 48px; display: flex; align-items: center; justify-content: center; background: #000; }
.cortana { width: 344px; display: flex; align-items: center; background: #333; padding: 0 13px 0 9px; gap: 6px; }
.ringo { width: 21px; height: 21px; border: 3px solid #f0f0f0; border-radius: 50%; }
.cortana input { flex: 1; border: 0; padding: 0; background: none; font-size: 14px; outline: 0; }
.cortana input::placeholder { color: #9d9d9d; opacity: 1; }
.mic { width: 16px; height: 18px; }
.apps { display: flex; }
.apps button { width: 50px; display: flex; align-items: center; justify-content: center; border-top: 2px solid transparent; border-bottom: 2px solid transparent; }
.running button { width: 49px; background-clip: content-box; }
.running .on { width: 37px; margin: 0 6px; border-bottom-color: #76b9ed; }
.running .now { width: 47px; margin: 0 1px; background: #33393b border-box; border-top-color: #33393b; }
.white { color: #e8e8e8; }
.iebtn { color: #2e9ff0; --ring: #f6cf36; }
.tsep { width: 4px; height: 16px; margin: 12px 12px 0 8px; border: 1px solid #3a4446; border-width: 0 1px; }
.tray { margin-left: auto; display: flex; align-items: center; gap: 7px; white-space: nowrap; }
.tray .tsep { margin: 0 4px 0 0; }
.kb { width: 24px; height: 14px; }
.zh { font-size: 14px; margin: 0 4px; }
.tray time { width: 68px; margin: 0 4px 0 10px; text-align: center; line-height: 19px; }
.peek { width: 1px; height: 40px; margin: 0 3px 0 14px; background: #555; }

/* overlays */
.mark { position: absolute; left: 519px; top: 532px; width: 196px; height: 62px; }
.speed { position: absolute; left: 923px; top: 193px; width: 124px; height: 40px; display: flex; align-items: center; gap: 5px; border: 1px solid #aaa; border-radius: 20px; background: linear-gradient(#f2f2f2, #cfcfcf); box-shadow: 0 3px 6px rgba(0, 0, 0, .3); font: 10px/15px "Open Sans", sans-serif; }
.ball { flex: none; width: 48px; height: 48px; margin-left: -5px; border-radius: 50%; border: 2px solid #eee; outline: 1px solid #aaa; background: radial-gradient(ellipse at 50% 12%, rgba(255, 255, 255, .7), transparent 30%), linear-gradient(#0b7a50 0 40%, #45cc5c 40%); color: #fff; font: 14px/42px "Liberation Sans", sans-serif; text-align: center; }
.rates span { display: flex; align-items: center; gap: 6px; white-space: nowrap; }
.rates svg { width: 8px; height: 10px; }
.plus { width: 20px; height: 20px; margin-left: -1px; }
.dialog { position: absolute; left: 825px; top: 239px; width: 456px; height: 349px; display: flex; flex-direction: column; border: 1px solid #3a8ee6; background: #f0f0f0; box-shadow: 0 4px 14px rgba(0, 0, 0, .4); }
.dtitle { flex: none; height: 25px; display: flex; justify-content: space-between; align-items: center; padding: 0 9px 0 3px; background: #fff; }
.dtitle svg { width: 12px; height: 12px; }
.dbody { flex: 1; border: 1px solid #a9a9a9; background: #fff; padding: 0 1px; }
.dgrid { width: 404px; }
.d1 { width: 21px; } .d2 { width: 61px; } .d3 { width: 121px; } .d4 { width: 201px; }
.grid.dgrid thead th { height: 20px; }
.dgrid tbody td { height: 28px; }
.grid tbody .rowhot { background: #ffd28a; color: #5a0060; }
.dgrid .pick { background: #d9e9f8; text-align: center; }
.dgrid .shape { text-align: center; line-height: 12px; padding-left: 5px; }
.shape svg { width: 136px; height: 12px; margin: 1px auto -3px; }
.dfoot { flex: none; height: 41px; display: flex; align-items: center; gap: 7px; padding: 0 12px 0 5px; }
.dfoot button { width: 73px; height: 23px; border: 1px solid #adadad; background: #e1e1e1; }
.dfoot .ok { border: 2px solid #0078d7; }
.fill { flex: 1; }
.ime { position: absolute; left: 1055px; top: 702px; width: 206px; height: 26px; display: flex; align-items: center; justify-content: space-between; padding: 3px 5px 0 0; border-right: 1px solid #b4cbe4; background: linear-gradient(#b4cbe4, #b4cbe4) 20px 2px / 100% 1px no-repeat, linear-gradient(#fff, #fff) 20px 3px / 100% 100% no-repeat; }
.ime .so { width: 27px; height: 26px; margin-top: -3px; }
.ime b { color: #1f74cc; font-size: 15px; }
```
